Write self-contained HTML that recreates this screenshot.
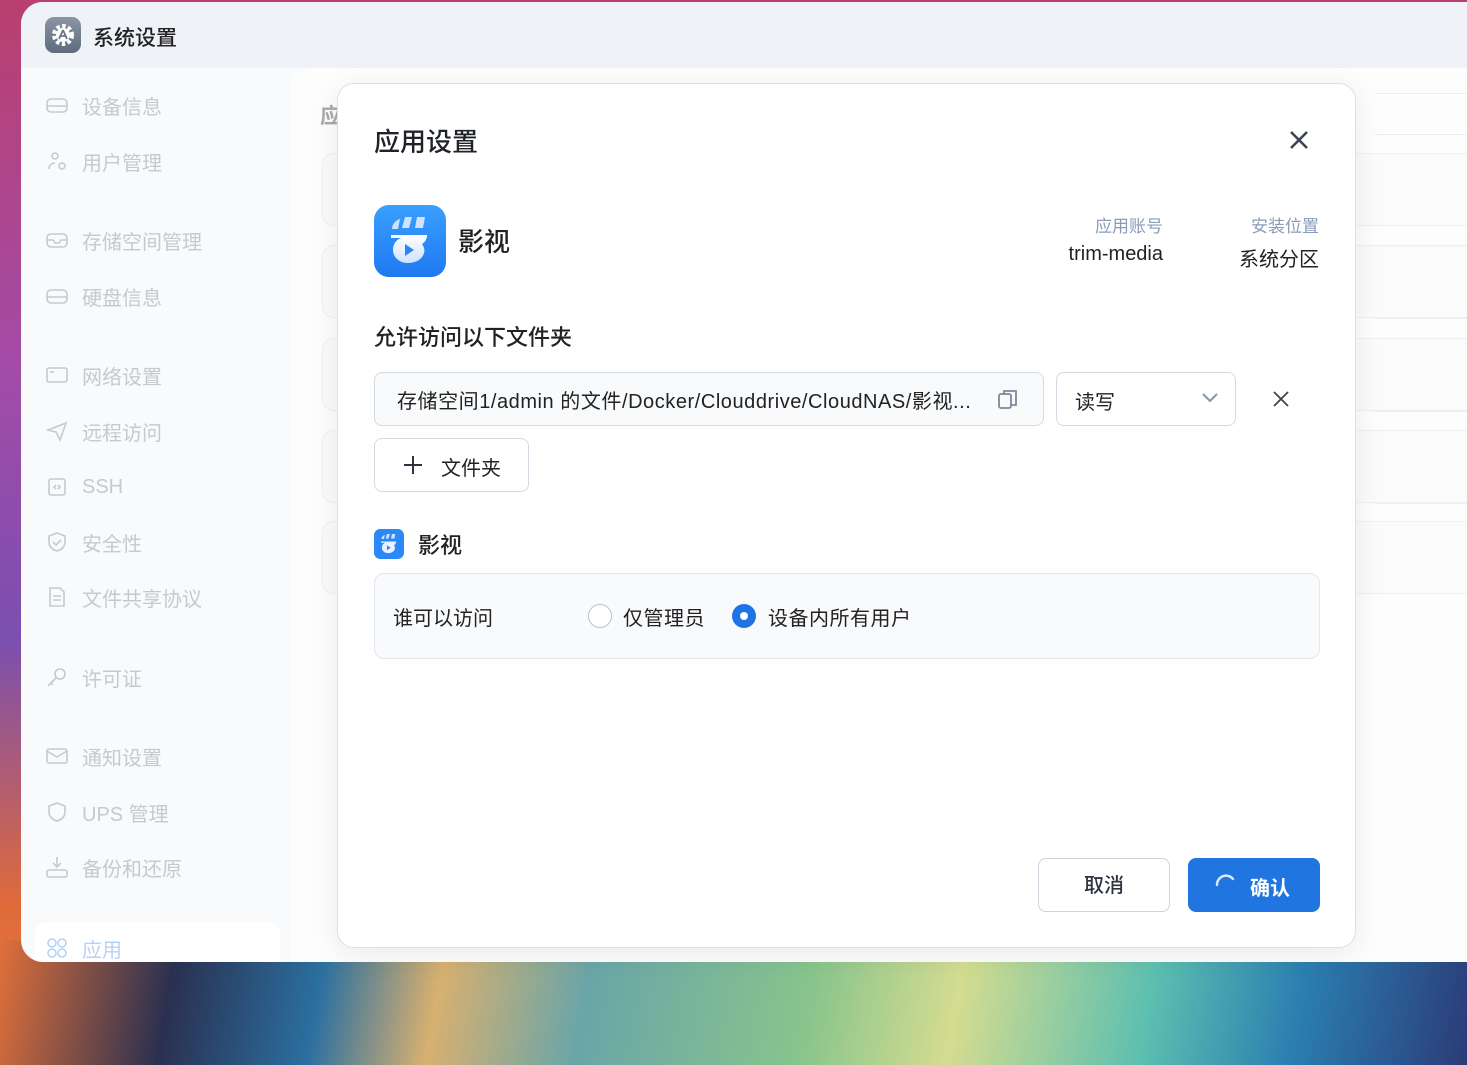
<!DOCTYPE html>
<html><head><meta charset="utf-8"><style>
*{margin:0;padding:0;box-sizing:border-box}
body{width:1467px;height:1065px;overflow:hidden;position:relative;font-family:"Liberation Sans","Noto Sans CJK SC",sans-serif;background:#2a3a6a}
.wall{position:absolute;left:0;top:0;width:1467px;height:1065px;
background:linear-gradient(180deg,#b9406e 0%,#a24ba8 35%,#7a4fb0 60%,#e06a3a 85%,#e07a40 100%);}
.wallb{position:absolute;left:0;top:940px;width:1467px;height:125px;
background:
radial-gradient(ellipse 260px 90px at 360px 1065px,#1b2d55 0%,rgba(27,45,85,0) 100%),
linear-gradient(100deg,#e0703a 0%,#2a3050 12%,#2b6fa0 22%,#d8b070 30%,#6aa5a8 40%,#88c48c 55%,#d4dc90 65%,#5cbfb0 78%,#2b7fb0 88%,#2b3b78 100%);}
.win{position:absolute;left:21px;top:2px;width:1460px;height:960px;background:#f8fafc;border-radius:22px 0 0 22px;overflow:hidden}
.title{position:absolute;left:0;top:0;width:100%;height:66px;background:#eff3f8}
.title .ic{position:absolute;left:24px;top:15px;width:36px;height:36px;border-radius:9px;background:linear-gradient(#8a96a6,#5e6b7c)}
.title span{position:absolute;left:72px;top:20px;font-size:21px;color:#222;font-weight:500}
.side{position:absolute;left:0;top:66px;width:269px;height:900px}
.it{position:absolute;left:25px;height:30px;display:flex;align-items:center;font-size:20px;color:#c6c9ce}
.it svg{width:22px;height:22px;margin-right:14px;fill:none;stroke:#c6c9ce;stroke-width:1.6}
.content{position:absolute;left:269px;top:66px;width:1200px;height:900px;background:#fdfdfe;border-radius:20px 0 0 0}
.card{position:absolute;left:32px;width:1200px;border:1px solid #eef0f3;border-radius:12px;background:#fbfbfc}
.rl{position:absolute;left:1085px;width:200px;height:1px;background:#eceef1}
.dlg{position:absolute;left:337px;top:83px;width:1019px;height:865px;background:#fff;border:1px solid #dcdfe4;border-radius:17px;box-shadow:0 6px 30px rgba(0,0,0,.08)}
.abs{position:absolute}
</style></head><body>
<div class="wall"></div><div class="wallb"></div>
<div class="win">
 <div class="title"><div class="ic"><svg width="36" height="36" viewBox="0 0 36 36"><circle cx="18" cy="18" r="9" fill="none" stroke="#fff" stroke-width="4" stroke-dasharray="3.5 2.4"/><circle cx="18" cy="18" r="7" fill="#fff"/><path d="M18 13 L14 22 M18 13 L22 22 M15.5 19 H20.5" stroke="#6a7688" stroke-width="1.8" fill="none"/></svg></div><span>系统设置</span></div>
 <div class="side">
  <div class="it" style="top:22px"><svg viewBox="0 0 22 22"><rect x="1" y="5" width="20" height="13" rx="4"/><path d="M1 12h20"/></svg>设备信息</div>
  <div class="it" style="top:78px"><svg viewBox="0 0 22 22"><circle cx="9" cy="6" r="3"/><path d="M3 19c0-4 3-6 6-6"/><circle cx="16" cy="16" r="3"/></svg>用户管理</div>
  <div class="it" style="top:157px"><svg viewBox="0 0 22 22"><rect x="1" y="5" width="20" height="13" rx="4"/><path d="M1 11h6l2 3h4l2-3h6"/></svg>存储空间管理</div>
  <div class="it" style="top:213px"><svg viewBox="0 0 22 22"><rect x="1" y="5" width="20" height="13" rx="4"/><path d="M1 12h20"/></svg>硬盘信息</div>
  <div class="it" style="top:292px"><svg viewBox="0 0 22 22"><rect x="1" y="4" width="20" height="14" rx="2"/><path d="M4 8h4"/></svg>网络设置</div>
  <div class="it" style="top:348px"><svg viewBox="0 0 22 22"><path d="M2 10L20 3 14 20 10 12z"/></svg>远程访问</div>
  <div class="it" style="top:404px"><svg viewBox="0 0 22 22"><rect x="3" y="3" width="16" height="16" rx="2"/><path d="M10 9l-2 2 2 2M12 9l2 2-2 2"/></svg>SSH</div>
  <div class="it" style="top:459px"><svg viewBox="0 0 22 22"><path d="M11 2l8 3v6c0 5-4 8-8 9-4-1-8-4-8-9V5z"/><path d="M7 11l3 3 5-5"/></svg>安全性</div>
  <div class="it" style="top:514px"><svg viewBox="0 0 22 22"><path d="M4 2h10l4 4v14H4z"/><path d="M7 10h8M7 14h8"/></svg>文件共享协议</div>
  <div class="it" style="top:594px"><svg viewBox="0 0 22 22"><circle cx="14" cy="8" r="5"/><path d="M10 12L2 20M5 17l2 2"/></svg>许可证</div>
  <div class="it" style="top:673px"><svg viewBox="0 0 22 22"><rect x="1" y="4" width="20" height="14" rx="2"/><path d="M1 6l10 6 10-6"/></svg>通知设置</div>
  <div class="it" style="top:729px"><svg viewBox="0 0 22 22"><path d="M11 2l8 3v6c0 5-4 8-8 9-4-1-8-4-8-9V5z"/></svg>UPS 管理</div>
  <div class="it" style="top:784px"><svg viewBox="0 0 22 22"><path d="M11 1v9M7 7l4 4 4-4"/><rect x="1" y="14" width="20" height="7" rx="2"/></svg>备份和还原</div>
  <div style="position:absolute;left:14px;top:854px;width:245px;height:50px;background:#fff;border-radius:12px"></div>
  <div class="it" style="top:865px;color:#b6d2f6"><svg viewBox="0 0 22 22" style="stroke:#b6d2f6"><circle cx="6" cy="6" r="4"/><circle cx="16" cy="6" r="4"/><circle cx="6" cy="16" r="4"/><circle cx="16" cy="16" r="4"/></svg>应用</div>
 </div>
 <div class="content">
  <div class="abs" style="left:30px;top:32px;font-size:21px;color:#aaa;font-weight:600">应</div>
  <div class="card" style="top:85px;height:73px"></div>
  <div class="card" style="top:177px;height:73px"></div>
  <div class="card" style="top:270px;height:73px"></div>
  <div class="card" style="top:362px;height:73px"></div>
  <div class="card" style="top:453px;height:73px"></div>
  <div class="rl" style="top:25px"></div><div class="rl" style="top:66px"></div><div class="rl" style="top:85px"></div>
  <div class="rl" style="top:177px"></div><div class="rl" style="top:250px"></div>
  <div class="rl" style="top:270px"></div><div class="rl" style="top:343px"></div>
  <div class="rl" style="top:362px"></div><div class="rl" style="top:435px"></div>
 </div>
</div>
<div class="dlg">
 <div class="abs" style="left:36px;top:38px;font-size:26px;color:#1f2329;font-weight:500">应用设置</div>
 <svg class="abs" style="left:950px;top:45px" width="22" height="22" viewBox="0 0 22 22"><path d="M3 3L19 19M19 3L3 19" stroke="#3d4450" stroke-width="2.6"/></svg>
 <svg class="abs" style="left:36px;top:121px" width="72" height="72" viewBox="0 0 72 72"><defs><linearGradient id="g" x1="0" y1="0" x2="0" y2="1"><stop offset="0" stop-color="#3aa0ff"/><stop offset="1" stop-color="#1f78f0"/></linearGradient><linearGradient id="w" x1="0" y1="0" x2="0" y2="1"><stop offset="0" stop-color="#fff"/><stop offset="1" stop-color="#cfe2ff"/></linearGradient></defs><rect width="72" height="72" rx="15" fill="url(#g)"/><path d="M18 24c0-5 4-9 8-10l-2 10z M31 12h7l-3 11h-7z M43 12h8l-2 11h-8z" fill="#cfe2ff"/><path d="M17 30h36c0 5-3 8-5 9 2 3 3 6 2 9-2 7-9 10-16 10-9 0-15-6-15-13 0-6 3-10 8-12h-10z" fill="url(#w)"/><path d="M31 39l9 6-9 6z" fill="#2a85f5"/></svg>
 <div class="abs" style="left:120px;top:138px;font-size:26px;color:#222;font-weight:500">影视</div>
 <div class="abs" style="left:700px;top:128px;width:125px;text-align:right;font-size:17px;color:#8a9bb8">应用账号</div>
 <div class="abs" style="left:670px;top:159px;width:155px;text-align:right;font-size:20px;color:#222">trim-media</div>
 <div class="abs" style="left:850px;top:128px;width:131px;text-align:right;font-size:17px;color:#8a9bb8">安装位置</div>
 <div class="abs" style="left:850px;top:159px;width:131px;text-align:right;font-size:20px;color:#222">系统分区</div>
 <div class="abs" style="left:36px;top:236px;font-size:22px;color:#222;font-weight:500">允许访问以下文件夹</div>
 <div class="abs" style="left:36px;top:288px;width:670px;height:54px;border:1px solid #d4dae3;border-radius:8px;background:#f8fafc"></div>
 <div class="abs" style="left:59px;top:301px;font-size:20px;color:#222;white-space:nowrap;letter-spacing:0.55px">存储空间1/admin 的文件/Docker/Clouddrive/CloudNAS/影视...</div>
 <svg class="abs" style="left:658px;top:303px" width="24" height="24" viewBox="0 0 24 24"><rect x="3" y="7" width="12" height="14" rx="2" fill="none" stroke="#7d8898" stroke-width="1.8"/><path d="M8 7V4h12v14h-5" fill="none" stroke="#7d8898" stroke-width="1.8"/></svg>
 <div class="abs" style="left:718px;top:288px;width:180px;height:54px;border:1px solid #d4dae3;border-radius:8px"></div>
 <div class="abs" style="left:737px;top:302px;font-size:20px;color:#222">读写</div>
 <svg class="abs" style="left:862px;top:306px" width="20" height="14" viewBox="0 0 20 14"><path d="M3 4l7 7 7-7" fill="none" stroke="#8896ab" stroke-width="2"/></svg>
 <svg class="abs" style="left:934px;top:306px" width="18" height="18" viewBox="0 0 18 18"><path d="M2 2L16 16M16 2L2 16" stroke="#3d4450" stroke-width="1.8"/></svg>
 <div class="abs" style="left:36px;top:354px;width:155px;height:54px;border:1px solid #d4dae3;border-radius:8px"></div>
 <svg class="abs" style="left:65px;top:371px" width="20" height="20" viewBox="0 0 20 20"><path d="M10 1v18M1 10h18" stroke="#2d3440" stroke-width="2"/></svg>
 <div class="abs" style="left:103px;top:368px;font-size:20px;color:#222">文件夹</div>
 <svg class="abs" style="left:36px;top:445px" width="30" height="30" viewBox="0 0 72 72"><rect width="72" height="72" rx="15" fill="#2a88f8"/><path d="M18 24c0-5 4-9 8-10l-2 10z M31 12h7l-3 11h-7z M43 12h8l-2 11h-8z" fill="#cfe2ff"/><path d="M17 30h36c0 5-3 8-5 9 2 3 3 6 2 9-2 7-9 10-16 10-9 0-15-6-15-13 0-6 3-10 8-12h-10z" fill="#eaf2ff"/><path d="M31 39l9 6-9 6z" fill="#2a85f5"/></svg>
 <div class="abs" style="left:80px;top:444px;font-size:22px;color:#222;font-weight:500">影视</div>
 <div class="abs" style="left:36px;top:489px;width:946px;height:86px;border:1px solid #e2e7ee;border-radius:10px;background:#f8fafc"></div>
 <div class="abs" style="left:55px;top:518px;font-size:20px;color:#222">谁可以访问</div>
 <div class="abs" style="left:250px;top:520px;width:24px;height:24px;border:1.5px solid #b9c2cf;border-radius:50%;background:#fff"></div>
 <div class="abs" style="left:285px;top:518px;font-size:20px;color:#222;letter-spacing:0.5px">仅管理员</div>
 <div class="abs" style="left:394px;top:520px;width:24px;height:24px;border-radius:50%;background:#1f74e5"><div style="position:absolute;left:8px;top:8px;width:8px;height:8px;border-radius:50%;background:#fff"></div></div>
 <div class="abs" style="left:430px;top:518px;font-size:20px;color:#222;letter-spacing:0.5px">设备内所有用户</div>
 <div class="abs" style="left:700px;top:774px;width:132px;height:54px;border:1px solid #ccd3dd;border-radius:8px;text-align:center;line-height:54px;font-size:20px;color:#2d3440;font-weight:500">取消</div>
 <div class="abs" style="left:850px;top:774px;width:132px;height:54px;background:#2075e0;border-radius:8px"></div>
 <svg class="abs" style="left:875px;top:788px" width="26" height="26" viewBox="0 0 26 26"><path d="M4 13A9 9 0 0 1 20 7" fill="none" stroke="#dbe9ff" stroke-width="2.4" stroke-linecap="round"/></svg>
 <div class="abs" style="left:912px;top:788px;font-size:20px;color:#fff;font-weight:700">确认</div>
</div>
</body></html>
